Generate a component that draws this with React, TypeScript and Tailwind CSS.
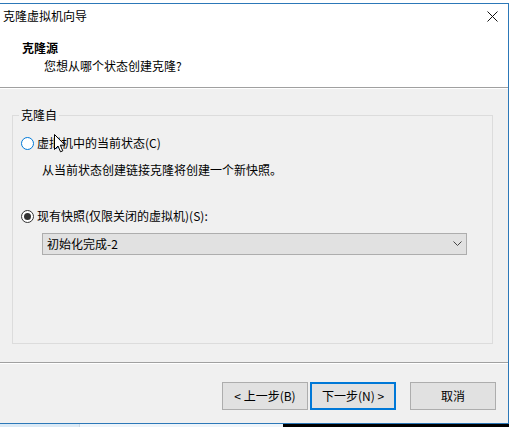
import React from "react";

const font = { fontFamily: '"Noto Sans CJK SC", "Microsoft YaHei", sans-serif' };

function Radio({ checked, hover }: { checked?: boolean; hover?: boolean }) {
  return (
    <span
      className={`w-[13px] h-[13px] rounded-full border bg-white flex items-center justify-center shrink-0 ${
        hover ? "border-[#0078d7]" : "border-[#333333]"
      }`}
    >
      {checked && <span className="w-[7px] h-[7px] rounded-full bg-[#333333]" />}
    </span>
  );
}

export default function App() {
  return (
    <div className="w-[509px] h-[427px] bg-white flex flex-col relative overflow-hidden text-[12px] leading-[16px] text-black" style={font}>
      <div className="h-[3px] bg-white shrink-0" />
      <div className="h-[421px] shrink-0 border-t border-r border-b border-[#2c78b8] flex flex-col bg-white">
        {/* title bar */}
        <div className="h-[24px] flex items-center justify-between pl-[3px] pr-[10px] shrink-0">
          <span>克隆虚拟机向导</span>
          <svg width="11" height="11" viewBox="0 0 11 11" className="mr-[0px]">
            <path d="M0.5 0.5 L10.5 10.5 M10.5 0.5 L0.5 10.5" stroke="#111" strokeWidth="1" />
          </svg>
        </div>
        {/* header */}
        <div className="h-[59px] shrink-0 pt-[12px] pl-[22px]">
          <div className="font-bold">克隆源</div>
          <div className="mt-[2px] pl-[22px]">您想从哪个状态创建克隆?</div>
        </div>
        <div className="h-[1px] bg-[#a0a0a0] shrink-0" />
        <div className="h-[1px] bg-white shrink-0" />
        {/* body */}
        <div className="h-[273px] bg-[#f0f0f0] shrink-0 pt-[26px] pl-[12px]">
          <div className="w-[481px] h-[229px] border border-[#dcdcdc] relative">
            <span className="absolute top-[-9px] left-[6px] px-[2px] bg-[#f0f0f0]">克隆自</span>
            <div className="pt-[19px] pl-[8px] flex items-center gap-[3px] h-[35px]">
              <Radio hover />
              <span>虚拟机中的当前状态(C)</span>
            </div>
            <div className="mt-[11px] pl-[29px]">从当前状态创建链接克隆将创建一个新快照。</div>
            <div className="mt-[30px] pl-[8px] flex items-center gap-[3px]">
              <Radio checked />
              <span>现有快照(仅限关闭的虚拟机)(S):</span>
            </div>
            <div className="mt-[9px] ml-[29px] w-[425px] h-[22px] bg-[#e1e1e1] border border-[#adadad] flex items-center justify-between pl-[4px] pr-[4px]">
              <span>初始化完成-2</span>
              <svg width="9" height="6" viewBox="0 0 9 6" className="mr-[0px]">
                <path d="M0.5 0.5 L4.5 4.5 L8.5 0.5" stroke="#444" fill="none" strokeWidth="1" />
              </svg>
            </div>
          </div>
        </div>
        <div className="h-[1px] bg-[#a0a0a0] shrink-0" />
        <div className="h-[1px] bg-white shrink-0" />
        {/* footer */}
        <div className="flex-1 bg-[#f0f0f0] pt-[18px] flex justify-end pr-[12px]">
          <div className="flex h-[28px]">
            <button className="w-[86px] h-[28px] bg-[#e1e1e1] border border-[#adadad] flex items-center justify-center">&lt; 上一步(B)</button>
            <button className="ml-[2px] w-[86px] h-[28px] bg-[#e1e1e1] border-2 border-[#0078d7] flex items-center justify-center">下一步(N) &gt;</button>
            <button className="ml-[14px] w-[86px] h-[28px] bg-[#e1e1e1] border border-[#adadad] flex items-center justify-center">取消</button>
          </div>
        </div>
      </div>
      <div className="flex-1 flex">
        <div className="w-[80px] bg-[#dbeaf6] border-r border-[#c8d8e6]" />
        <div className="w-[203px] bg-[#eef5fb]" />
        <div className="flex-1 bg-black" />
      </div>
      {/* mouse cursor */}
      <svg className="absolute left-[54px] top-[134px]" width="13" height="20" viewBox="0 0 13 20">
        <path d="M0.5 0.5 L0.5 15.5 L4 12 L6.5 17.8 L8.8 16.8 L6.3 11.2 L11 11.2 Z" fill="white" stroke="black" strokeWidth="1" strokeLinejoin="round" />
      </svg>
    </div>
  );
}
